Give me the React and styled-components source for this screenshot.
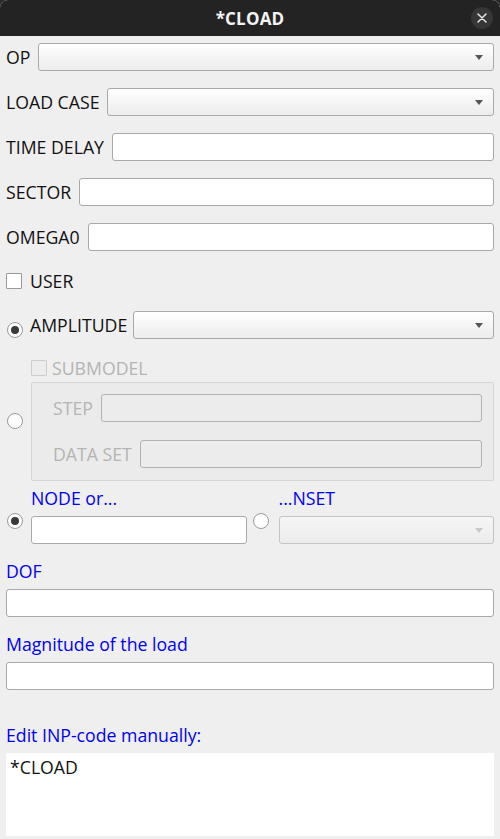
import React from "react";
import styled, { createGlobalStyle } from "styled-components";

const Global = createGlobalStyle`
  html, body { margin: 0; padding: 0; background: #2a2a2a; }
  * { box-sizing: border-box; }
  #root { width: 500px; height: 839px; }
`;

const FONT = `"Open Sans", "Noto Sans", "DejaVu Sans", sans-serif`;

const Window = styled.div`
  width: 500px;
  height: 839px;
  background: #efefef;
  border-radius: 8px 8px 0 0;
  overflow: hidden;
  display: flex;
  flex-direction: column;
  font-family: ${FONT};
  font-size: 17.7px;
  color: #111;
`;

const TitleBar = styled.div`
  height: 36px;
  flex: none;
  background: #232323;
  display: flex;
  align-items: center;
  justify-content: center;
  position: relative;
`;

const Title = styled.div`
  color: #f4f4f4;
  font-weight: 700;
  font-size: 17px;
  letter-spacing: 0.2px;
`;

const CloseButton = styled.div`
  position: absolute;
  right: 7px;
  top: 7px;
  width: 22px;
  height: 22px;
  border-radius: 50%;
  background: #363636;
  display: flex;
  align-items: center;
  justify-content: center;
`;

const Content = styled.div`
  flex: 1;
  display: flex;
  flex-direction: column;
  padding: 7px 6px 3px 6px;
`;

const Row = styled.div`
  display: flex;
  align-items: center;
  height: 28px;
  gap: ${(p) => p.$gap ?? 8}px;
  margin-top: ${(p) => p.$mt ?? 0}px;
  flex: none;
`;

const Label = styled.span`
  white-space: nowrap;
  color: ${(p) => (p.$disabled ? "#b4b4b4" : "#111")};
  line-height: 20px;
`;

const BlueLabel = styled.div`
  color: #0000f5;
  line-height: 24px;
  height: 24px;
  white-space: nowrap;
  margin-top: ${(p) => p.$mt ?? 0}px;
  margin-bottom: 6px;
`;

const ComboBox = styled.div`
  flex: 1;
  height: 28px;
  min-width: 0;
  border: 1px solid ${(p) => (p.$disabled ? "#c4c4c4" : "#a9a9a9")};
  border-radius: 3px;
  background: ${(p) =>
    p.$disabled
      ? "linear-gradient(#f6f6f6, #ececec)"
      : "linear-gradient(#ffffff, #ececec)"};
  display: flex;
  align-items: center;
  justify-content: flex-end;
  padding-right: 10px;
`;

const Arrow = styled.div`
  width: 0;
  height: 0;
  border-left: 4.5px solid transparent;
  border-right: 4.5px solid transparent;
  border-top: 5px solid ${(p) => (p.$disabled ? "#c8c8c8" : "#555")};
`;

const TextField = styled.div`
  flex: ${(p) => (p.$block ? "none" : 1)};
  width: ${(p) => (p.$block ? "100%" : "auto")};
  min-width: 0;
  height: 28px;
  border: 1px solid ${(p) => (p.$disabled ? "#b2b2b2" : "#a9a9a9")};
  border-radius: 3px;
  background: ${(p) => (p.$disabled ? "#ececec" : "#ffffff")};
`;

const CheckBox = styled.div`
  width: 16px;
  height: 16px;
  flex: none;
  border: 1px solid ${(p) => (p.$disabled ? "#cdcdcd" : "#9a9a9a")};
  background: ${(p) => (p.$disabled ? "#ececec" : "#ffffff")};
  border-radius: 1px;
`;

const Radio = styled.div`
  width: 16px;
  height: 16px;
  flex: none;
  border-radius: 50%;
  border: 1px solid #9a9a9a;
  background: #ffffff;
  display: flex;
  align-items: center;
  justify-content: center;
  margin-top: ${(p) => p.$mt ?? 0}px;
  margin-left: ${(p) => p.$ml ?? 1}px;
  &::after {
    content: "";
    display: ${(p) => (p.$checked ? "block" : "none")};
    width: 8px;
    height: 8px;
    border-radius: 50%;
    background: #3a3a3a;
  }
`;

const ChoiceRow = styled.div`
  display: flex;
  align-items: center;
  margin-top: ${(p) => p.$mt ?? 0}px;
  flex: none;
`;

const RadioCol = styled.div`
  width: 24px;
  flex: none;
  display: flex;
  align-self: stretch;
  align-items: center;
`;

const SubCol = styled.div`
  flex: 1;
  display: flex;
  flex-direction: column;
  margin-left: 1px;
`;

const SubCheckRow = styled.div`
  display: flex;
  align-items: center;
  gap: 5px;
  height: 16px;
  margin-bottom: 6px;
`;

const GroupBox = styled.div`
  border: 1px solid #d6d6d6;
  border-radius: 2px;
  background: #ebebeb;
  padding: 11px 11px 12px 21px;
  display: flex;
  flex-direction: column;
  gap: 18px;
`;

const NodeGrid = styled.div`
  display: grid;
  grid-template-columns: 25px 1fr 32px 1fr;
  grid-template-rows: 30px 28px;
  margin-top: 5px;
  flex: none;
`;

const GridLabel = styled.div`
  color: #0000f5;
  line-height: 24px;
  height: 24px;
  white-space: nowrap;
  grid-column: ${(p) => p.$col};
  grid-row: 1;
`;

const GridCell = styled.div`
  grid-column: ${(p) => p.$col};
  grid-row: 2;
  display: flex;
  justify-content: ${(p) => (p.$center ? "center" : "flex-start")};
  align-items: flex-start;
`;

const CodeArea = styled.div`
  flex: 1;
  background: #ffffff;
  padding: 2px 4px;
  line-height: 24px;
  color: #111;
`;

const Combo = ({ disabled }) => (
  <ComboBox $disabled={disabled}>
    <Arrow $disabled={disabled} />
  </ComboBox>
);

export default function App() {
  return (
    <>
      <Global />
      <Window>
        <TitleBar>
          <Title>*CLOAD</Title>
          <CloseButton>
            <svg width="10" height="10" viewBox="0 0 10 10">
              <path d="M1 1 L9 9 M9 1 L1 9" stroke="#e8e8e8" strokeWidth="1.5" strokeLinecap="round" />
            </svg>
          </CloseButton>
        </TitleBar>
        <Content>
          <Row>
            <Label>OP</Label>
            <Combo />
          </Row>
          <Row $mt={17}>
            <Label>LOAD CASE</Label>
            <Combo />
          </Row>
          <Row $mt={17}>
            <Label>TIME DELAY</Label>
            <TextField />
          </Row>
          <Row $mt={17}>
            <Label>SECTOR</Label>
            <TextField />
          </Row>
          <Row $mt={17}>
            <Label>OMEGA0</Label>
            <TextField />
          </Row>
          <Row $mt={16}>
            <CheckBox />
            <Label>USER</Label>
          </Row>
          <ChoiceRow $mt={16}>
            <RadioCol>
              <Radio $checked $mt={10} />
            </RadioCol>
            <Row $gap={6} style={{ flex: 1 }}>
              <Label>AMPLITUDE</Label>
              <Combo />
            </Row>
          </ChoiceRow>
          <ChoiceRow $mt={21}>
            <RadioCol>
              <Radio />
            </RadioCol>
            <SubCol>
              <SubCheckRow>
                <CheckBox $disabled />
                <Label $disabled>SUBMODEL</Label>
              </SubCheckRow>
              <GroupBox>
                <Row>
                  <Label $disabled>STEP</Label>
                  <TextField $disabled />
                </Row>
                <Row>
                  <Label $disabled>DATA SET</Label>
                  <TextField $disabled />
                </Row>
              </GroupBox>
            </SubCol>
          </ChoiceRow>
          <NodeGrid>
            <GridLabel $col={2}>NODE or...</GridLabel>
            <GridLabel $col={4}>...NSET</GridLabel>
            <GridCell $col={1}>
              <Radio $checked $mt={-3} />
            </GridCell>
            <GridCell $col={2}>
              <TextField />
            </GridCell>
            <GridCell $col={3} $center>
              <Radio $mt={-3} $ml={-3} />
            </GridCell>
            <GridCell $col={4}>
              <Combo disabled />
            </GridCell>
          </NodeGrid>
          <BlueLabel $mt={15}>DOF</BlueLabel>
          <TextField $block />
          <BlueLabel $mt={15}>Magnitude of the load</BlueLabel>
          <TextField $block />
          <BlueLabel $mt={33}>Edit INP-code manually:</BlueLabel>
          <CodeArea>*CLOAD</CodeArea>
        </Content>
      </Window>
    </>
  );
}
